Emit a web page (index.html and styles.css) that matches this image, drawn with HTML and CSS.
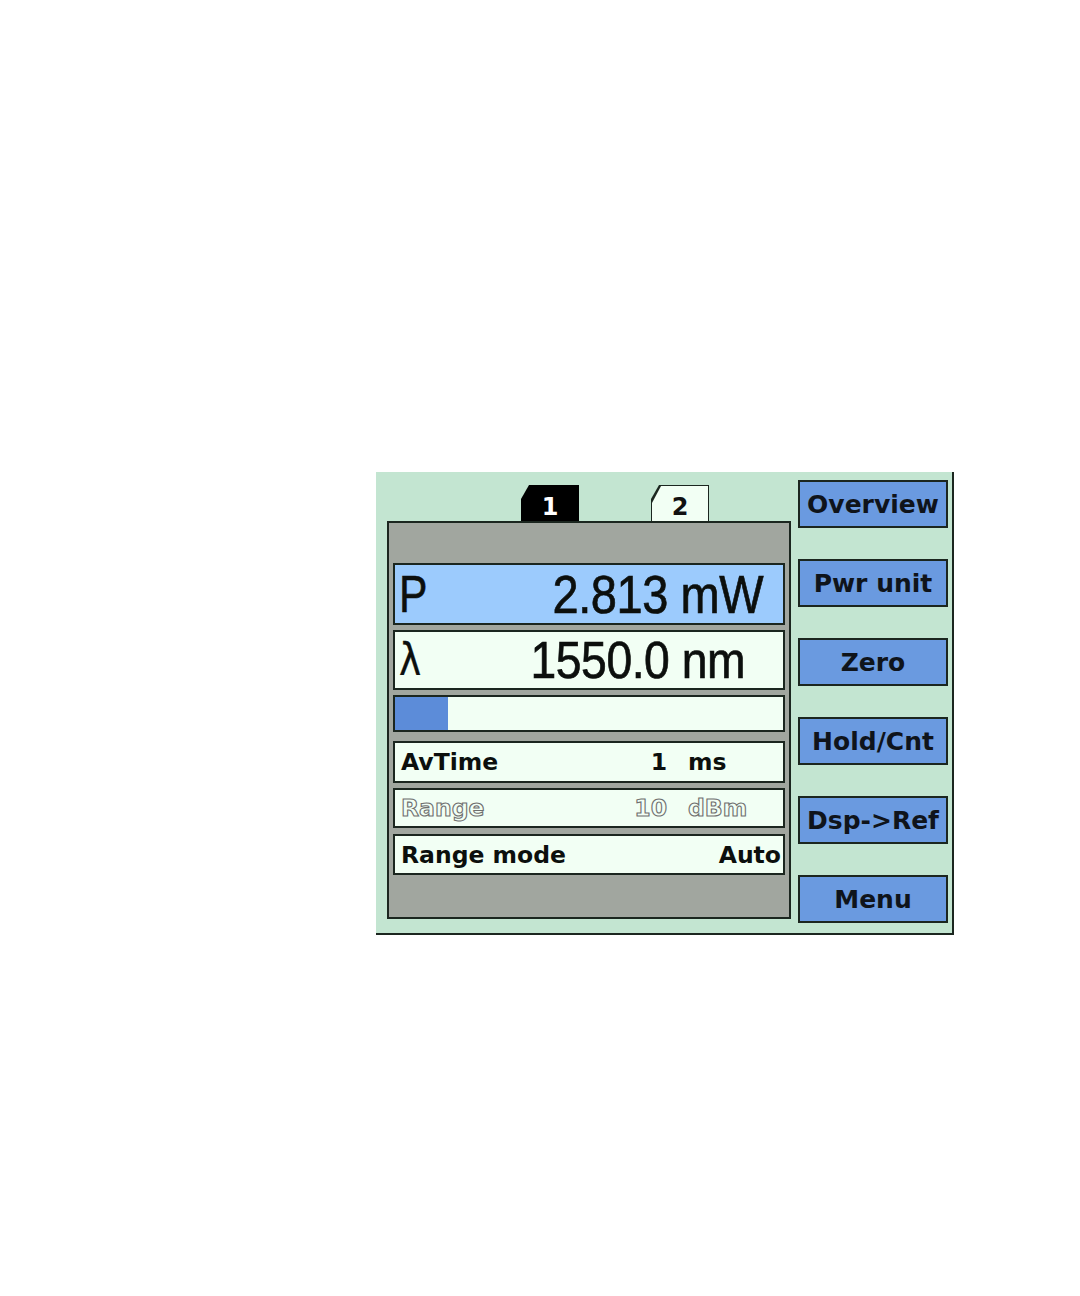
FILE: index.html
```html
<!DOCTYPE html>
<html>
<head>
<meta charset="utf-8">
<link rel="stylesheet" href="styles.css">
</head>
<body>
<div class="screen">
  <div class="left">
    <div class="tabs">
      <div class="tab tab-active"><span>1</span></div>
      <div class="tab tab-idle"><div class="tab-inner"><span>2</span></div></div>
    </div>
    <div class="panel">
      <div class="row row-big row-power">
        <span class="sym">P</span>
        <span class="big-val val-power">2.813 mW</span>
      </div>
      <div class="row row-big row-wave">
        <span class="sym sym-lambda">λ</span>
        <span class="big-val val-wave">1550.0 nm</span>
      </div>
      <div class="row row-bar">
        <div class="bar-fill"></div>
      </div>
      <div class="row row-set">
        <span class="label">AvTime</span>
        <span class="num">1</span>
        <span class="unit">ms</span>
      </div>
      <div class="row row-set row-disabled">
        <span class="label">Range</span>
        <span class="num">10</span>
        <span class="unit">dBm</span>
      </div>
      <div class="row row-set">
        <span class="label">Range mode</span>
        <span class="auto">Auto</span>
      </div>
    </div>
  </div>
  <div class="softkeys">
    <div class="key">Overview</div>
    <div class="key">Pwr unit</div>
    <div class="key">Zero</div>
    <div class="key">Hold/Cnt</div>
    <div class="key">Dsp-&gt;Ref</div>
    <div class="key">Menu</div>
  </div>
</div>
</body>
</html>
```

FILE: styles.css
```css
html, body {
  margin: 0;
  padding: 0;
  background: #ffffff;
}
body {
  padding: 472px 0 0 376px;
  font-family: "DejaVu Sans", "Liberation Sans", sans-serif;
}
.screen {
  width: 578px;
  height: 463px;
  box-sizing: border-box;
  background: #c3e5d1;
  border-right: 2px solid #1b261f;
  border-bottom: 2px solid #1b261f;
  display: flex;
  flex-direction: row;
}
.left {
  width: 415px;
  padding: 13px 0 0 11px;
  box-sizing: border-box;
  display: flex;
  flex-direction: column;
}
.tabs {
  height: 36px;
  display: flex;
  flex-direction: row;
  padding-left: 134px;
  gap: 72px;
}
.tab {
  width: 58px;
  height: 36px;
  box-sizing: border-box;
  clip-path: polygon(0 14px, 8px 0, 100% 0, 100% 100%, 0 100%);
  font-weight: bold;
  font-size: 24px;
  text-align: center;
}
.tab span {
  display: block;
  padding-top: 9px;
  line-height: 26px;
}
.tab-active {
  background: #000000;
  color: #ffffff;
}
.tab-idle {
  background: #1b261f;
  padding: 1px 1px 0 1px;
  color: #111;
}
.tab-inner {
  height: 100%;
  background: #f2fff4;
  clip-path: polygon(0 17px, 9px 0, 100% 0, 100% 100%, 0 100%);
}
.tab-idle span {
  padding-top: 8px;
}
.panel {
  width: 404px;
  height: 398px;
  box-sizing: border-box;
  background: #a1a69f;
  border: 2px solid #1b261f;
  padding: 40px 4px 0 4px;
  display: flex;
  flex-direction: column;
}
.row {
  box-sizing: border-box;
  border: 2px solid #1b261f;
  background: #f2fff4;
  display: flex;
  flex-direction: row;
  align-items: center;
  color: #0c0f0d;
}
.row-big {
  font-family: "Liberation Sans", Arial, sans-serif;
  justify-content: space-between;
}
.row-power {
  height: 62px;
  background: #9ccbfd;
  padding: 0 20px 0 4px;
}
.row-wave {
  height: 60px;
  margin-top: 5px;
  padding: 0 38px 0 4px;
}
.sym {
  font-size: 52px;
  line-height: 56px;
  transform: scaleX(0.82);
  transform-origin: left center;
  -webkit-text-stroke: 0.6px #0c0f0d;
}
.sym-lambda {
  font-family: "DejaVu Sans", sans-serif;
  font-size: 44px;
  transform: scaleX(0.85);
  -webkit-text-stroke: 0.3px #0c0f0d;
}
.big-val {
  font-size: 54px;
  line-height: 56px;
  letter-spacing: -0.5px;
  transform: scaleX(0.87);
  transform-origin: right center;
  -webkit-text-stroke: 0.7px #0c0f0d;
}
.val-wave {
  font-size: 52px;
  transform: scaleX(0.89);
}
.row-bar {
  height: 37px;
  margin-top: 5px;
  align-items: stretch;
}
.bar-fill {
  width: 53px;
  background: #5c8cd9;
}
.row-set {
  font-weight: bold;
  font-size: 23.5px;
  padding: 0 2px 0 6px;
}
.row-set:nth-child(4) {
  height: 42px;
  margin-top: 9px;
}
.row-disabled {
  height: 40px;
  margin-top: 5px;
}
.row-set:nth-child(6) {
  height: 41px;
  margin-top: 6px;
}
.label {
  flex: 1;
}
.num {
  text-align: right;
}
.unit {
  width: 114px;
  padding-left: 21px;
  box-sizing: border-box;
}
.auto {
  text-align: right;
}
.row-disabled span {
  color: transparent;
  -webkit-text-stroke: 1.1px #6f6f6f;
  font-weight: bold;
}
.softkeys {
  width: 150px;
  margin-left: 7px;
  padding-top: 8px;
  display: flex;
  flex-direction: column;
  gap: 31px;
}
.key {
  height: 48px;
  box-sizing: border-box;
  border: 2px solid #1b261f;
  background: #6a9ae0;
  color: #0f141b;
  font-weight: bold;
  font-size: 25px;
  display: flex;
  align-items: center;
  justify-content: center;
  white-space: nowrap;
}
```
